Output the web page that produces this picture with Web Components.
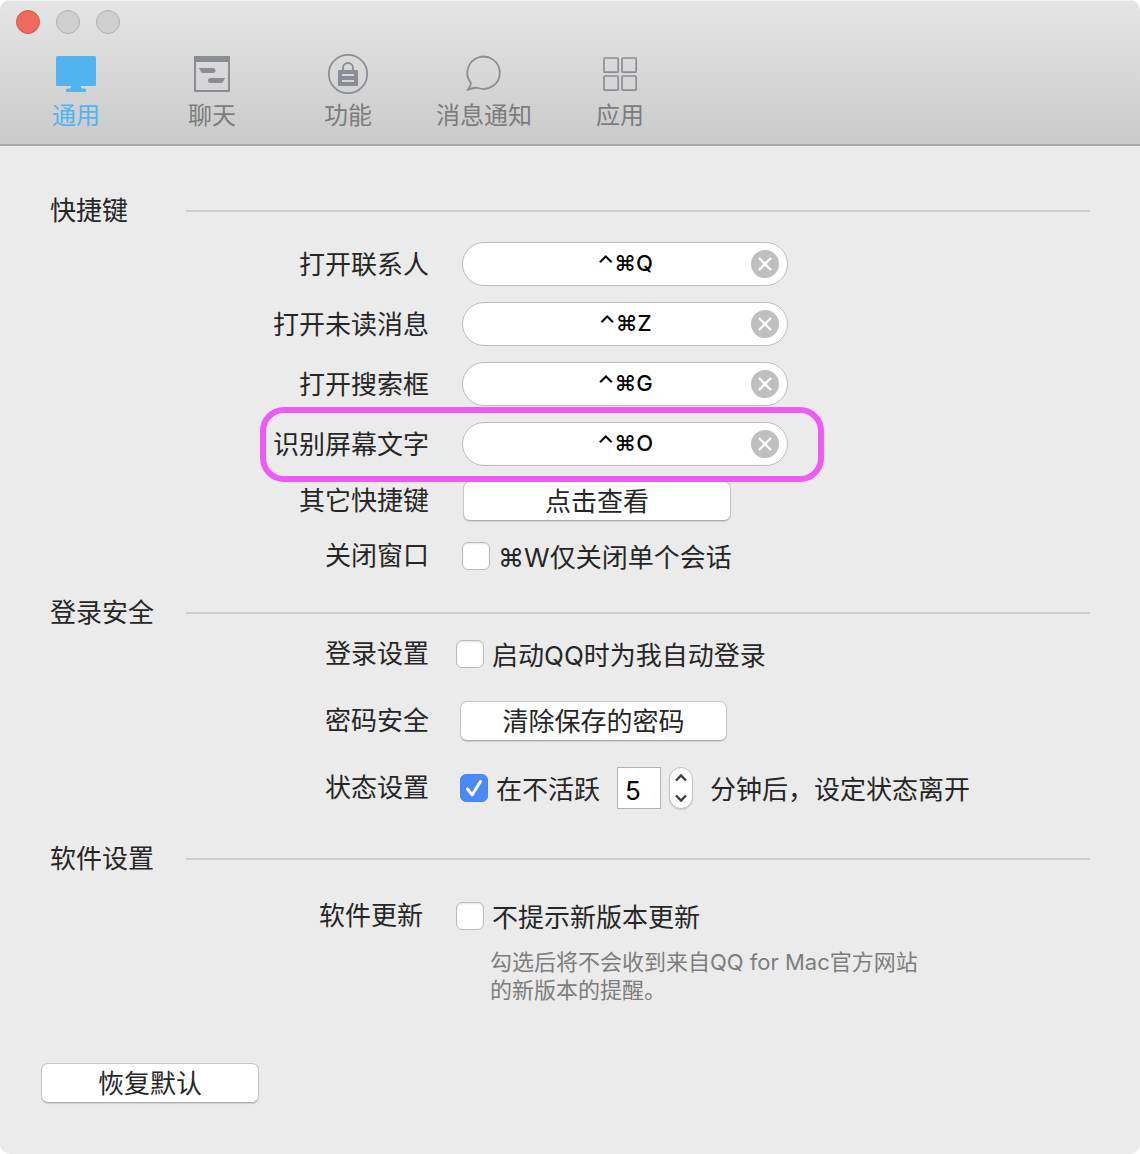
<!DOCTYPE html>
<html lang="zh-CN">
<head>
<meta charset="UTF-8">
<meta name="viewport" content="width=device-width, initial-scale=1.0">
<title>通用</title>
<style>
    body {
        margin: 0;
        background: #fff;
        color: #262626;
        font-family: Inter, 'Noto Sans CJK SC', sans-serif;
        font-size: 26px;
        line-height: 40px;
    }
</style>
</head>
<body>
<prefs-window>
    <prefs-toolbar slot="toolbar">
        <prefs-tab icon="display" active>通用</prefs-tab>
        <prefs-tab icon="chat">聊天</prefs-tab>
        <prefs-tab icon="lock">功能</prefs-tab>
        <prefs-tab icon="bubble">消息通知</prefs-tab>
        <prefs-tab icon="grid">应用</prefs-tab>
    </prefs-toolbar>

    <prefs-section heading="快捷键" class="shortcuts">
        <shortcut-row label="打开联系人" value="⌃⌘Q"></shortcut-row>
        <shortcut-row label="打开未读消息" value="⌃⌘Z"></shortcut-row>
        <shortcut-row label="打开搜索框" value="⌃⌘G"></shortcut-row>
        <shortcut-row label="识别屏幕文字" value="⌃⌘O" highlighted></shortcut-row>
        <setting-row label="其它快捷键" class="more"><push-button class="view">点击查看</push-button></setting-row>
        <setting-row label="关闭窗口" class="close"><check-box>⌘W仅关闭单个会话</check-box></setting-row>
    </prefs-section>

    <prefs-section heading="登录安全" class="login">
        <setting-row label="登录设置" class="outdent"><check-box>启动QQ时为我自动登录</check-box></setting-row>
        <setting-row label="密码安全"><push-button class="clear">清除保存的密码</push-button></setting-row>
        <setting-row label="状态设置">
            <check-box checked>在不活跃</check-box>
            <number-stepper value="5" label="分钟"></number-stepper>
            <span class="text">分钟后，设定状态离开</span>
        </setting-row>
    </prefs-section>

    <prefs-section heading="软件设置" class="software">
        <setting-row label="软件更新">
            <check-box>不提示新版本更新</check-box>
            <p slot="hint">勾选后将不会收到来自QQ for Mac官方网站的新版本的提醒。</p>
        </setting-row>
    </prefs-section>

    <push-button slot="footer" class="reset">恢复默认</push-button>
</prefs-window>

<script>
const ICONS = {
    display: `<rect x="0" y="2" width="40" height="30" rx="1.5" fill="currentColor"/>
        <path d="M15 32h10v2.500h3.500a1.500 1.500 0 0 1 1.500 1.500v2H10v-2a1.500 1.500 0 0 1 1.500-1.500H15z" fill="currentColor"/>`,
    chat: `<rect x="3" y="3" width="34" height="34" rx=".5" fill="none" stroke="currentColor" stroke-width="2"/>
        <path d="M2 2h36v6H2z" fill="currentColor"/>
        <path d="M6.500 14H21a2.500 2.500 0 0 1 0 5H11q-2 0-2.500-2L8 15.500z" fill="currentColor"/>
        <path d="M33.500 24H18.500a2.500 2.500 0 0 0 0 5H29q2 0 2.500-2l.5-1.500z" fill="currentColor"/>`,
    lock: `<circle cx="20" cy="20" r="19.200" fill="none" stroke="currentColor" stroke-width="1.700"/>
        <path d="M15 16.500V14a5 5 0 0 1 10 0v2.500" fill="none" stroke="currentColor" stroke-width="1.800"/>
        <path fill-rule="evenodd" d="M11 16h18a1 1 0 0 1 1 1v14a1 1 0 0 1-1 1H11a1 1 0 0 1-1-1V17a1 1 0 0 1 1-1zm3 4v2h12v-2zm0 6v2h12v-2z" fill="currentColor"/>`,
    bubble: `<path d="M3.500 36q3.300-3.500 3.500-7A16.200 16.200 0 1 1 14 34q-3-1-10.500 2z" fill="none" stroke="currentColor" stroke-width="1.800" stroke-linejoin="round"/>`,
    grid: `<g fill="none" stroke="currentColor" stroke-width="1.700">
        <rect x="4" y="4" width="14.200" height="14.200" rx="1"/><rect x="22" y="4" width="14.200" height="14.200" rx="1"/>
        <rect x="4" y="22" width="14.200" height="14.200" rx="1"/><rect x="22" y="22" width="14.200" height="14.200" rx="1"/></g>`
};

// layout shared by every "label: control" line
const ROW_STYLE = `
    :host { display: block; position: relative; }
    .row {
        display: grid;
        grid-template-columns: 380px 1fr;
        column-gap: var(--row-gap, 30px);
        align-items: center;
        min-height: var(--row-height, 42px);
    }
    .label { padding-right: var(--label-inset, 1px); text-align: right; }
`;

class PrefsWindow extends HTMLElement {
    constructor() {
        super();
        this.attachShadow({ mode: 'open' });
        this.shadowRoot.innerHTML = `
            <style>
                :host {
                    display: block;
                    box-sizing: border-box;
                    min-height: 100vh;
                    background: #ebebeb;
                    border-radius: 10px;
                    overflow: hidden;
                }
                main { padding: 45px 50px 0; }
                footer { padding: 59px 41px 50px; }
                ::slotted(.shortcuts) { --heading-gap: 12px; --rows-gap: 18px; }
                ::slotted(.login) { --heading-gap: 0px; --rows-gap: 25px; margin-top: 16px; }
                ::slotted(.software) { --heading-gap: 16px; --label-inset: 7px; --row-gap: 26px; margin-top: 30px; }
                ::slotted(.reset) { width: 218px; }
            </style>
            <slot name="toolbar"></slot>
            <main><slot></slot></main>
            <footer><slot name="footer"></slot></footer>
        `;
    }
}

class PrefsToolbar extends HTMLElement {
    constructor() {
        super();
        this.attachShadow({ mode: 'open' });
        this.shadowRoot.innerHTML = `
            <style>
                :host {
                    display: block;
                    padding: 10px 8px 12px;
                    background: linear-gradient(#e5e5e5, #cacaca);
                    border-bottom: 2px solid #a9a9a9;
                    box-shadow: inset 0 1px #f3f3f3;
                }
                .lights { display: flex; gap: 16px; padding: 0 8px 20px; }
                .lights button {
                    width: 24px;
                    height: 24px;
                    padding: 0;
                    border: 1px solid #b0b0b0;
                    border-radius: 50%;
                    background: #cfcfcf;
                }
                .lights .close { background: #ee6a5f; border-color: #d6554b; }
                nav { display: flex; }
            </style>
            <div class="lights">
                <button class="close" aria-label="关闭"></button>
                <button aria-label="最小化"></button>
                <button aria-label="缩放"></button>
            </div>
            <nav><slot></slot></nav>
        `;
    }
}

class PrefsTab extends HTMLElement {
    constructor() {
        super();
        this.attachShadow({ mode: 'open' });
        this.shadowRoot.innerHTML = `
            <style>
                :host { display: block; width: 136px; color: #7c7c7c; --icon: #8b8d94; }
                :host([active]) { color: #51b4f1; --icon: #51b4f1; }
                button {
                    display: flex;
                    flex-direction: column;
                    align-items: center;
                    gap: 6px;
                    width: 100%;
                    padding: 0;
                    border: 0;
                    background: none;
                    color: inherit;
                    font: inherit;
                    font-size: 24px;
                    line-height: 32px;
                }
                svg { width: 40px; height: 40px; color: var(--icon); }
            </style>
            <button><svg viewBox="0 0 40 40">${ICONS[this.getAttribute('icon')]}</svg><span><slot></slot></span></button>
        `;
    }
}

class PrefsSection extends HTMLElement {
    constructor() {
        super();
        this.attachShadow({ mode: 'open' });
        this.shadowRoot.innerHTML = `
            <style>
                :host { display: block; }
                header {
                    display: grid;
                    grid-template-columns: 136px 1fr;
                    align-items: center;
                    margin-bottom: var(--heading-gap);
                }
                h2 { margin: 0; font: inherit; }
                hr { width: 100%; margin: 0; border: 0; border-top: 2px solid #cfcfcf; }
                .rows { display: flex; flex-direction: column; gap: var(--rows-gap); }
                ::slotted(.more) { --row-gap: 33px; --row-height: 40px; margin-top: -2px; }
                ::slotted(.close) { --row-gap: 32px; margin-top: -4px; }
                ::slotted(.outdent) { --row-gap: 26px; }
            </style>
            <header><h2></h2><hr></header>
            <div class="rows"><slot></slot></div>
        `;
        this.shadowRoot.querySelector('h2').textContent = this.getAttribute('heading');
    }
}

class SettingRow extends HTMLElement {
    constructor() {
        super();
        this.attachShadow({ mode: 'open' });
        this.shadowRoot.innerHTML = `
            <style>
                ${ROW_STYLE}
                .controls { display: flex; align-items: center; }
                ::slotted(number-stepper) { margin: 0 17px; }
                ::slotted(.text) { margin: 2px 0 -2px; }
                ::slotted(.view) { width: 268px; }
                ::slotted(.clear) { width: 267px; }
                ::slotted([slot=hint]) {
                    width: 440px;
                    margin: 11px 0 0 440px;
                    color: #7d7d7d;
                    font-size: 22px;
                    line-height: 28px;
                }
            </style>
            <div class="row">
                <div class="label"></div>
                <div class="controls"><slot></slot></div>
            </div>
            <slot name="hint"></slot>
        `;
        this.shadowRoot.querySelector('.label').textContent = this.getAttribute('label');
    }
}

class ShortcutRow extends HTMLElement {
    constructor() {
        super();
        this.attachShadow({ mode: 'open' });
        this.shadowRoot.innerHTML = `
            <style>
                ${ROW_STYLE}
                :host { --row-gap: 32px; }
                .label { padding-top: 2px; }
                /* marker ring drawn over the neighbouring rows */
                :host([highlighted])::after {
                    content: '';
                    position: absolute;
                    z-index: 1;
                    inset: -16px auto auto 210px;
                    box-sizing: border-box;
                    width: 564px;
                    height: 75px;
                    border: 6px solid #ee5af5;
                    border-radius: 24px;
                    pointer-events: none;
                }
                .field {
                    display: flex;
                    align-items: center;
                    box-sizing: border-box;
                    width: 326px;
                    height: 44px;
                    margin: -1px 0;
                    padding: 0 8px 0 36px;
                    border: 1px solid #bdbdbd;
                    border-radius: 22px;
                    background: #fff;
                }
                input {
                    flex: 1;
                    min-width: 0;
                    padding: 0 0 2px;
                    border: 0;
                    outline: 0;
                    background: none;
                    color: #000;
                    font: inherit;
                    font-size: 22px;
                    font-weight: 500;
                    text-align: center;
                }
                button { width: 28px; height: 28px; padding: 0; border: 0; background: none; }
                svg { display: block; }
            </style>
            <div class="row">
                <label class="label" for="keys"></label>
                <div class="field">
                    <input id="keys" type="text" readonly>
                    <button aria-label="清除">
                        <svg width="28" height="28" viewBox="0 0 28 28">
                            <circle cx="14" cy="14" r="14" fill="#bfbfbf"/>
                            <path d="M8 8l12 12M20 8L8 20" stroke="#fff" stroke-width="2.400"/>
                        </svg>
                    </button>
                </div>
            </div>
        `;
        this.shadowRoot.querySelector('label').textContent = this.getAttribute('label');
        const input = this.shadowRoot.querySelector('input');
        input.value = this.getAttribute('value');
        this.shadowRoot.querySelector('button').addEventListener('click', () => { input.value = ''; });
    }
}

class PushButton extends HTMLElement {
    constructor() {
        super();
        this.attachShadow({ mode: 'open' });
        this.shadowRoot.innerHTML = `
            <style>
                :host { display: block; }
                button {
                    display: block;
                    width: 100%;
                    height: 40px;
                    padding: 0;
                    border: 1px solid #c6c6c6;
                    border-bottom-color: #adadad;
                    border-radius: 7px;
                    background: #fff;
                    box-shadow: 0 1px 1px rgba(0, 0, 0, 0.12);
                    color: inherit;
                    font: inherit;
                }
                button:active { background: #e4e4e4; }
            </style>
            <button><slot></slot></button>
        `;
    }
}

class CheckBox extends HTMLElement {
    constructor() {
        super();
        this.attachShadow({ mode: 'open' });
        this.shadowRoot.innerHTML = `
            <style>
                :host { display: block; }
                label { display: flex; align-items: center; gap: 8px; }
                .text { margin: 2px 0 -2px; }
                .box { display: grid; width: 28px; height: 28px; }
                .box > * { grid-area: 1 / 1; }
                input {
                    appearance: none;
                    box-sizing: border-box;
                    width: 28px;
                    height: 28px;
                    margin: 0;
                    border: 1px solid #bcbcbc;
                    border-radius: 6px;
                    background: #fff;
                    box-shadow: inset 0 1px 2px rgba(0, 0, 0, 0.12);
                }
                input:checked { background: #4a89f6; border-color: #4483f0; box-shadow: none; }
                svg { z-index: 1; visibility: hidden; pointer-events: none; }
                input:checked + svg { visibility: visible; }
            </style>
            <label>
                <span class="box">
                    <input type="checkbox">
                    <svg width="28" height="28" viewBox="0 0 28 28"><path d="M7.500 15l4.700 5.800L20.500 7.500" fill="none" stroke="#fff" stroke-width="3" stroke-linecap="round" stroke-linejoin="round"/></svg>
                </span>
                <span class="text"><slot></slot></span>
            </label>
        `;
        this.shadowRoot.querySelector('input').checked = this.hasAttribute('checked');
    }
}

class NumberStepper extends HTMLElement {
    constructor() {
        super();
        this.attachShadow({ mode: 'open' });
        this.shadowRoot.innerHTML = `
            <style>
                :host { display: flex; align-items: center; gap: 8px; }
                input {
                    box-sizing: border-box;
                    width: 44px;
                    height: 42px;
                    padding: 4px 0 0 7px;
                    border: 1px solid #b1b1b1;
                    border-radius: 0;
                    background: #fff;
                    color: #000;
                    font: inherit;
                }
                .stepper {
                    display: flex;
                    flex-direction: column;
                    box-sizing: border-box;
                    width: 24px;
                    height: 42px;
                    border: 1px solid #c2c2c2;
                    border-radius: 12px;
                    background: #fff;
                    box-shadow: 0 1px 1px rgba(0, 0, 0, 0.15);
                }
                button { flex: 1; min-height: 0; padding: 0; border: 0; background: none; }
                svg { display: block; margin: auto; }
            </style>
            <input type="text" inputmode="numeric">
            <div class="stepper">
                <button class="up" aria-label="增加"><svg width="14" height="12" viewBox="0 0 14 12"><path d="M2 8.500l5-5 5 5" fill="none" stroke="#3c3c3c" stroke-width="2.400"/></svg></button>
                <button class="down" aria-label="减少"><svg width="14" height="12" viewBox="0 0 14 12"><path d="M2 3.500l5 5 5-5" fill="none" stroke="#3c3c3c" stroke-width="2.400"/></svg></button>
            </div>
        `;
        const input = this.shadowRoot.querySelector('input');
        input.value = this.getAttribute('value');
        input.setAttribute('aria-label', this.getAttribute('label'));
        this.shadowRoot.querySelector('.up').addEventListener('click', () => { input.value = Number(input.value) + 1; });
        this.shadowRoot.querySelector('.down').addEventListener('click', () => { input.value = Math.max(1, Number(input.value) - 1); });
    }
}

customElements.define('prefs-window', PrefsWindow);
customElements.define('prefs-toolbar', PrefsToolbar);
customElements.define('prefs-tab', PrefsTab);
customElements.define('prefs-section', PrefsSection);
customElements.define('setting-row', SettingRow);
customElements.define('shortcut-row', ShortcutRow);
customElements.define('push-button', PushButton);
customElements.define('check-box', CheckBox);
customElements.define('number-stepper', NumberStepper);
</script>
</body>
</html>
